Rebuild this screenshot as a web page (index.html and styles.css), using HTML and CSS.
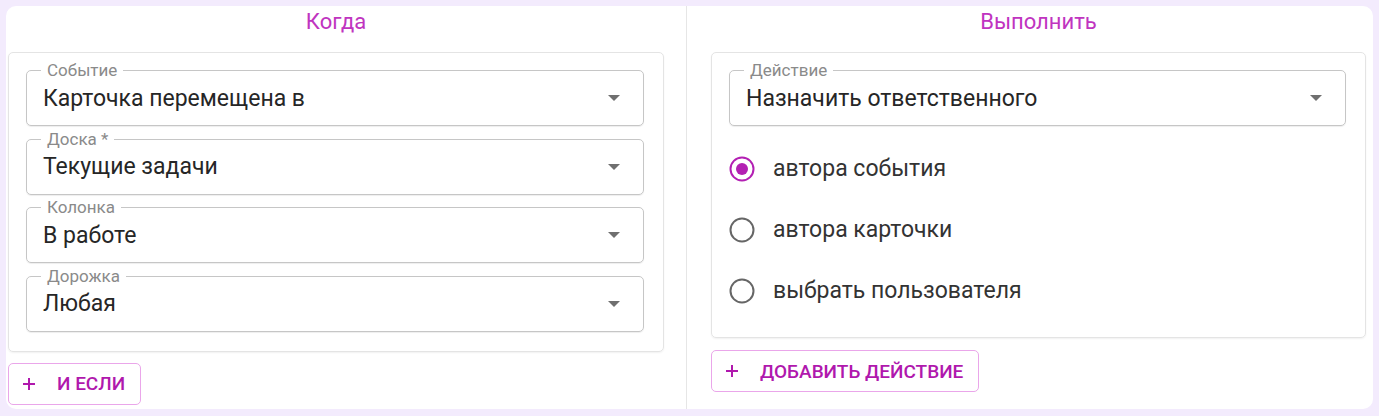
FILE: index.html
```html
<!DOCTYPE html>
<html lang="ru">
<head>
  <meta charset="UTF-8" />
  <meta name="viewport" content="width=device-width, initial-scale=1.0"/>
  <title>Правило автоматизации</title>

  <link rel="stylesheet" href="styles.css">
</head>
<body>

  <div class="panel">

    <!-- условие -->
    <section class="column column-when">
      <h2 class="column-title">Когда</h2>
      <div class="card">
        <div class="select">
          <span class="select-label">Событие</span>
          <span class="select-value">Карточка перемещена в</span>
          <svg class="select-arrow" viewBox="0 0 12 6"><path d="M0 0l6 6 6-6z"/></svg>
        </div>
        <div class="select">
          <span class="select-label">Доска *</span>
          <span class="select-value">Текущие задачи</span>
          <svg class="select-arrow" viewBox="0 0 12 6"><path d="M0 0l6 6 6-6z"/></svg>
        </div>
        <div class="select">
          <span class="select-label">Колонка</span>
          <span class="select-value">В работе</span>
          <svg class="select-arrow" viewBox="0 0 12 6"><path d="M0 0l6 6 6-6z"/></svg>
        </div>
        <div class="select">
          <span class="select-label">Дорожка</span>
          <span class="select-value">Любая</span>
          <svg class="select-arrow" viewBox="0 0 12 6"><path d="M0 0l6 6 6-6z"/></svg>
        </div>
      </div>
      <button class="add-button" type="button">
        <svg class="add-icon" viewBox="0 0 12 12"><path d="M6 0v12M0 6h12"/></svg>
        И если
      </button>
    </section>

    <!-- действие -->
    <section class="column column-do">
      <h2 class="column-title">Выполнить</h2>
      <div class="card card-action">
        <div class="select">
          <span class="select-label">Действие</span>
          <span class="select-value">Назначить ответственного</span>
          <svg class="select-arrow" viewBox="0 0 12 6"><path d="M0 0l6 6 6-6z"/></svg>
        </div>
        <div class="radio-group">
          <label class="radio checked">
            <svg class="radio-icon" viewBox="0 0 26 26"><circle class="ring" cx="13" cy="13" r="11.5"/><circle class="dot" cx="13" cy="13" r="6"/></svg>
            автора события
          </label>
          <label class="radio">
            <svg class="radio-icon" viewBox="0 0 26 26"><circle class="ring" cx="13" cy="13" r="11.5"/></svg>
            автора карточки
          </label>
          <label class="radio">
            <svg class="radio-icon" viewBox="0 0 26 26"><circle class="ring" cx="13" cy="13" r="11.5"/></svg>
            выбрать пользователя
          </label>
        </div>
      </div>
      <button class="add-button" type="button">
        <svg class="add-icon" viewBox="0 0 12 12"><path d="M6 0v12M0 6h12"/></svg>
        Добавить действие
      </button>
    </section>

  </div>

</body>
</html>
```

FILE: styles.css
```css
body {
  margin: 0;
  font-family: Roboto, 'Liberation Sans', sans-serif;
  background-color: #f3ebfd;
  color: #212121;
}

.panel {
  margin: 6px;
  height: 403px;
  background-color: #ffffff;
  border-radius: 10px;
  display: grid;
  grid-template-columns: 680px 1fr;
}

.column {
  padding-top: 4px;
}

.column-when {
  padding-left: 2px;
  padding-right: 22px;
}

.column-do {
  border-left: 1px solid #e6e6e6;
  padding-left: 24px;
  padding-right: 7px;
}

.column-title {
  margin: 0 0 18px 0;
  font-size: 22px;
  font-weight: 400;
  line-height: 24px;
  text-align: center;
  color: #c034c0;
}

.card {
  border: 1px solid #e4e4e4;
  border-radius: 5px;
  box-shadow: 0 1px 2px rgba(0, 0, 0, 0.06);
  padding: 17px 19px 19px 17px;
  display: flex;
  flex-direction: column;
  gap: 12.67px;
}

.card-action {
  gap: 0;
  padding-bottom: 16px;
}

/* select field */
.select {
  position: relative;
  height: 56px;
  box-sizing: border-box;
  border: 1px solid #c6c6c6;
  border-radius: 5px;
  box-shadow: 0 1px 1px rgba(0, 0, 0, 0.07);
  display: flex;
  align-items: center;
  padding: 0 14px 0 16px;
}

.select-label {
  position: absolute;
  left: 14px;
  top: -10px;
  padding: 0 6px;
  background-color: #ffffff;
  font-size: 17px;
  line-height: 19px;
  color: #8a8a8a;
}

.select-value {
  flex: 1;
  font-size: 23px;
  color: #262626;
}

.select-arrow {
  width: 12px;
  height: 6px;
  fill: #6f6f6f;
  margin-right: 9px;
}

/* radios */
.radio-group {
  margin-top: 12px;
  display: flex;
  flex-direction: column;
}

.radio {
  height: 61px;
  display: flex;
  align-items: center;
  gap: 18px;
  font-size: 23px;
  color: #333333;
}

.radio-icon {
  width: 26px;
  height: 26px;
}

.radio .ring {
  fill: none;
  stroke: #666666;
  stroke-width: 2;
}

.radio.checked .ring {
  stroke: #b320b3;
}

.radio .dot {
  fill: #b320b3;
}

/* add buttons */
.add-button {
  margin-top: 12px;
  height: 42px;
  display: flex;
  align-items: center;
  gap: 22px;
  padding: 0 15px 0 14px;
  background-color: #ffffff;
  border: 1px solid #eaa6ea;
  border-radius: 5px;
  font-family: Roboto, 'Liberation Sans', sans-serif;
  font-size: 19px;
  font-weight: 500;
  text-transform: uppercase;
  color: #b018ad;
  cursor: pointer;
}

.column-when .add-button {
  margin-top: 11px;
}

.add-icon {
  width: 12px;
  height: 12px;
  stroke: #b018ad;
  stroke-width: 2;
  fill: none;
}
```
